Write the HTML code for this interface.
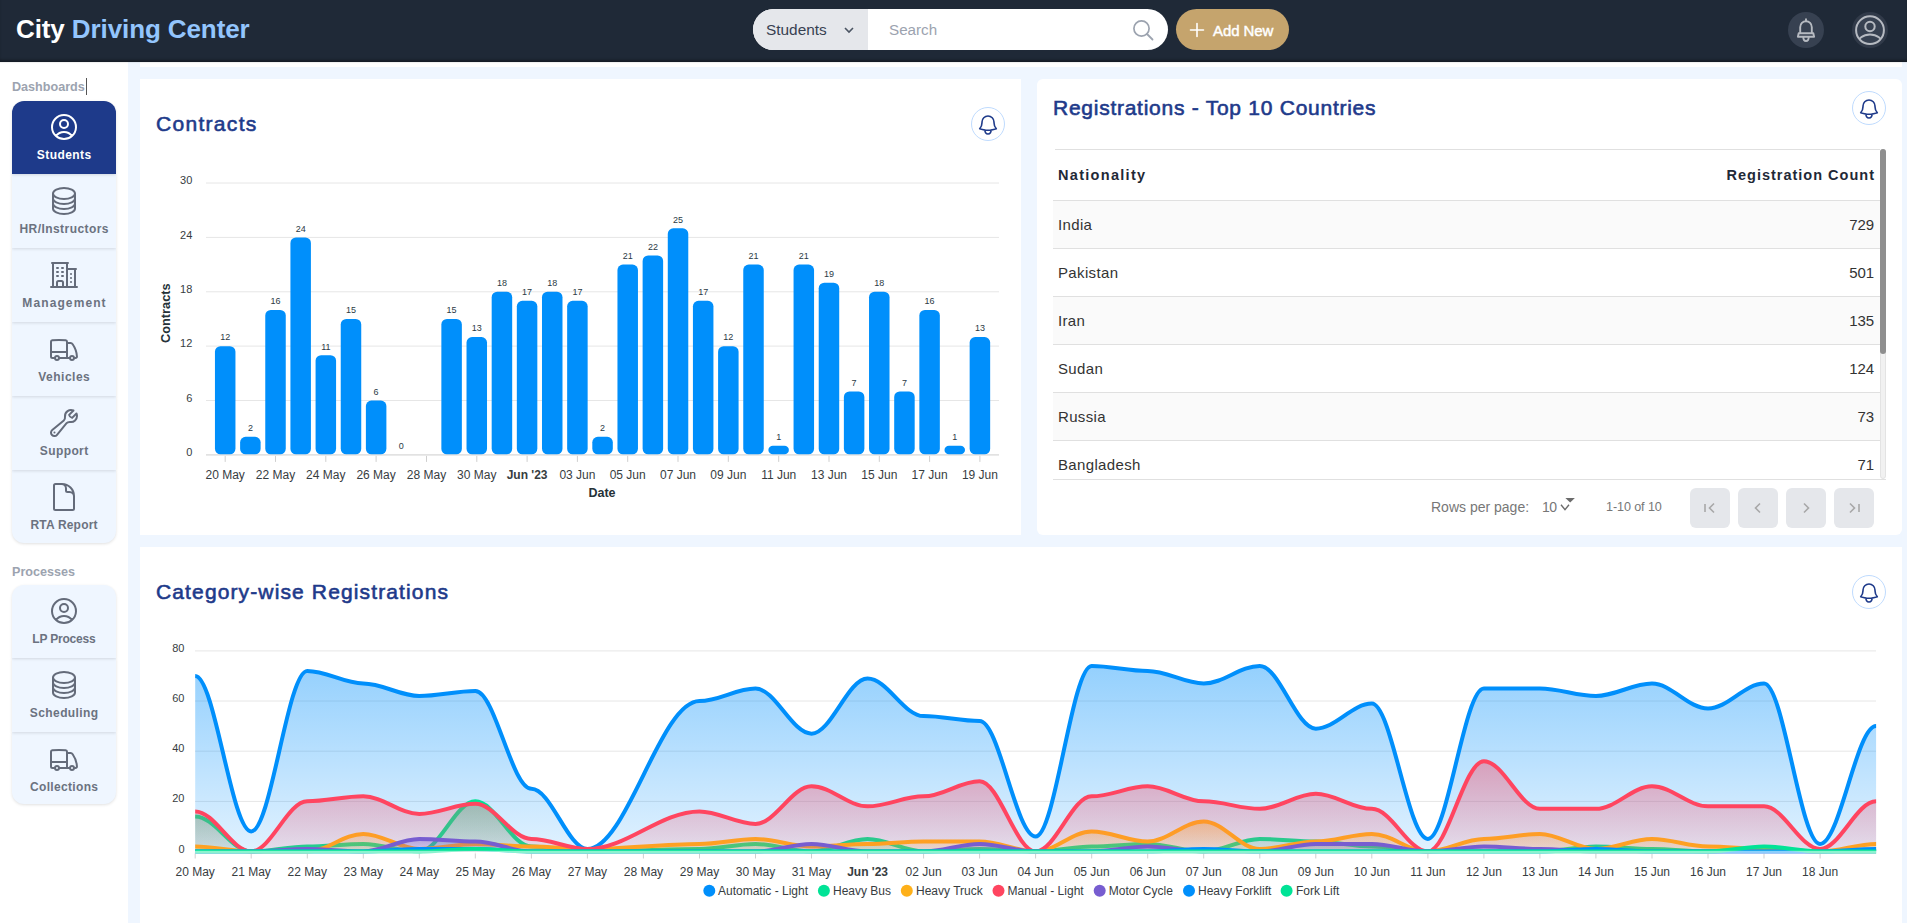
<!DOCTYPE html>
<html><head><meta charset="utf-8">
<style>
*{box-sizing:border-box;margin:0;padding:0}
html,body{width:1907px;height:923px;overflow:hidden;background:#fff;font-family:"Liberation Sans",sans-serif}
.abs{position:absolute}
#hdr{position:absolute;left:0;top:0;width:1907px;height:62px;background:#1f2937;box-shadow:inset 0 -3px 3px -1px rgba(0,0,0,.35),0 1px 1px rgba(0,0,0,.06);z-index:5}
#logo{position:absolute;left:16px;top:14px;font-size:26px;font-weight:bold;color:#fff;letter-spacing:-0.1px;white-space:nowrap}
#logo span{color:#93c5fd}
#search{position:absolute;left:753px;top:9px;width:415px;height:41px;border-radius:21px;background:#fff;overflow:hidden}
#search .dd{position:absolute;left:0;top:0;width:115px;height:41px;background:#e5e7eb}
#main{position:absolute;left:128px;top:62px;width:1779px;height:861px;background:#eff6ff}
.card{position:absolute;background:#fff}
.title{position:absolute;color:#1e3a8a;font-weight:normal;font-size:21px;white-space:nowrap;-webkit-text-stroke:0.6px #1e3a8a}
.bellbtn{position:absolute;width:34px;height:34px;border-radius:50%;border:1px solid #bfdbfe;background:#fff}
.bellbtn svg{position:absolute;left:4px;top:4.5px}
.side-label{position:absolute;left:12px;font-size:12.6px;font-weight:bold;color:#9ca3af;white-space:nowrap}
.item{position:absolute;left:12px;width:104px;height:74px;background:#eff6ff;box-shadow:0 1px 3px rgba(0,0,0,.12)}
.item .lbl{position:absolute;left:0;width:104px;text-align:center;top:47px;font-size:12px;font-weight:bold;color:#6b7280;letter-spacing:0.35px;white-space:nowrap}
.item svg{position:absolute}
.item.active{background:#1e3a8a}
.item.active .lbl{color:#fff}
table{border-collapse:collapse}
.row{position:absolute;left:1053px;width:827px;height:48px;border-bottom:1px solid #e0e0e0;font-size:15px;color:#333;letter-spacing:0.3px}
.row .c1{position:absolute;left:5px;top:15px}
.row .c2{position:absolute;right:6px;top:15px}
.pbtn{position:absolute;top:488px;width:40px;height:40px;border-radius:6px;background:#e5e7eb}
.pbtn svg{position:absolute;left:10px;top:10px}
</style></head><body>
<div id="hdr">
  <div id="logo">City <span>Driving Center</span></div>
  <div id="search">
    <div class="dd"></div>
    <div class="abs" style="left:13px;top:12px;font-size:15.4px;color:#374151">Students</div>
    <svg class="abs" style="left:90px;top:15px" width="12" height="12" viewBox="0 0 12 12"><path d="M2 4 L6 8 L10 4" fill="none" stroke="#4b5563" stroke-width="1.6"/></svg>
    <div class="abs" style="left:136px;top:11.5px;font-size:15.2px;color:#9ca3af">Search</div>
    <svg class="abs" style="left:379px;top:10px" width="22" height="22" viewBox="0 0 22 22"><circle cx="9.5" cy="9.5" r="7.6" fill="none" stroke="#9ca3af" stroke-width="1.7"/><path d="M15 15 L20.5 20.5" stroke="#9ca3af" stroke-width="1.8" stroke-linecap="round"/></svg>
  </div>
  <div class="abs" style="left:1176px;top:9px;width:113px;height:41px;border-radius:21px;background:#c5a46d"></div>
  <svg class="abs" style="left:1189px;top:22px" width="16" height="16" viewBox="0 0 16 16"><path d="M8 1.5V14.5M1.5 8H14.5" stroke="#fff" stroke-width="1.6" stroke-linecap="round"/></svg>
  <div class="abs" style="left:1213px;top:21.5px;font-size:15px;color:#fff;white-space:nowrap;-webkit-text-stroke:0.45px #fff;letter-spacing:-0.1px">Add New</div>
  <div class="abs" style="left:1788px;top:12px;width:36px;height:36px;border-radius:50%;background:#374151"></div>
  <svg class="abs" style="left:1794px;top:17px" width="24" height="26" viewBox="0 0 24 26"><path d="M12 1.5V4 M6.2 16.2V10.2C6.2 6.8 8.8 4.2 12 4.2S17.8 6.8 17.8 10.2V16.2 M4.7 16.2H19.3L20.1 19.8H3.9Z M9.3 20C9.3 22.4 10.5 24 12 24S14.7 22.4 14.7 20" fill="none" stroke="#b6bac1" stroke-width="1.9" stroke-linejoin="round"/></svg>
  <div class="abs" style="left:1852px;top:12px;width:36px;height:36px;border-radius:50%;background:#313a49"></div>
  <svg class="abs" style="left:1853px;top:13px" width="34" height="34" viewBox="0 0 34 34"><defs><clipPath id="avc"><circle cx="17" cy="17.2" r="13.9"/></clipPath></defs><circle cx="17" cy="17.2" r="13.9" fill="#374151" stroke="#b6bac1" stroke-width="2"/><circle cx="17" cy="13.5" r="4.7" fill="none" stroke="#b6bac1" stroke-width="2"/><ellipse cx="17" cy="31" rx="12.5" ry="9.5" fill="none" stroke="#b6bac1" stroke-width="2" clip-path="url(#avc)"/></svg>
</div>

<div id="main"></div>
<div class="abs" style="left:140px;top:62px;width:1762px;height:5px;background:#fff"></div>

<!-- sidebar -->
<div class="side-label" style="top:80px">Dashboards</div>
<div class="abs" style="left:86px;top:78px;width:1px;height:17px;background:#555"></div>
<div class="item active" style="top:101.0px;height:72.5px;border-radius:12px 12px 0 0;z-index:20"><svg width="32" height="32" viewBox="0 0 24 24" fill="none" stroke="#ffffff" stroke-width="1.5" stroke-linecap="round" stroke-linejoin="round" style="left:36px;top:10.0px"><path d="M17.982 18.725A7.488 7.488 0 0 0 12 15.75a7.488 7.488 0 0 0-5.982 2.975m11.963 0a9 9 0 1 0-11.963 0m11.963 0A8.966 8.966 0 0 1 12 21a8.966 8.966 0 0 1-5.982-2.275M15 9.75a3 3 0 1 1-6 0 3 3 0 0 1 6 0Z"/></svg><div class="lbl" style="top:47.0px;letter-spacing:0.44px;text-indent:0.44px">Students</div></div>
<div class="item" style="top:173.5px;height:74.0px;z-index:19"><svg width="32" height="32" viewBox="0 0 24 24" fill="none" stroke="#646b7a" stroke-width="1.5" stroke-linecap="round" stroke-linejoin="round" style="left:36px;top:11.3px"><path d="M20.25 6.375c0 2.278-3.694 4.125-8.25 4.125S3.75 8.653 3.75 6.375m16.5 0c0-2.278-3.694-4.125-8.25-4.125S3.75 4.097 3.75 6.375m16.5 0v11.25c0 2.278-3.694 4.125-8.25 4.125s-8.25-1.847-8.25-4.125V6.375m16.5 0v3.75m-16.5-3.75v3.75m16.5 0v3.75C20.25 16.153 16.556 18 12 18s-8.25-1.847-8.25-4.125v-3.75m16.5 0c0 2.278-3.694 4.125-8.25 4.125s-8.25-1.847-8.25-4.125"/></svg><div class="lbl" style="top:48.3px;letter-spacing:0.44px;text-indent:0.44px">HR/Instructors</div></div>
<div class="item" style="top:247.5px;height:74.0px;z-index:18"><svg width="32" height="32" viewBox="0 0 24 24" fill="none" stroke="#646b7a" stroke-width="1.5" stroke-linecap="round" stroke-linejoin="round" style="left:36px;top:11.3px"><path d="M2.25 21h19.5m-18-18v18m10.5-18v18m6-13.5V21M6.75 6.75h.75m-.75 3h.75m-.75 3h.75m3-6h.75m-.75 3h.75m-.75 3h.75M6.75 21v-3.375c0-.621.504-1.125 1.125-1.125h2.25c.621 0 1.125.504 1.125 1.125V21M3 3h12m-.75 4.5H21m-3.75 3.75h.008v.008h-.008v-.008Zm0 3h.008v.008h-.008v-.008Zm0 3h.008v.008h-.008v-.008Z"/></svg><div class="lbl" style="top:48.3px;letter-spacing:1.1px;text-indent:1.1px">Management</div></div>
<div class="item" style="top:321.5px;height:74.0px;z-index:17"><svg width="32" height="32" viewBox="0 0 24 24" fill="none" stroke="#646b7a" stroke-width="1.5" stroke-linecap="round" stroke-linejoin="round" style="left:36px;top:11.3px"><path d="M8.25 18.75a1.5 1.5 0 0 1-3 0m3 0a1.5 1.5 0 0 0-3 0m3 0h6m-9 0H3.375a1.125 1.125 0 0 1-1.125-1.125V14.25m17.25 4.5a1.5 1.5 0 0 1-3 0m3 0a1.5 1.5 0 0 0-3 0m3 0h1.125c.621 0 1.129-.504 1.09-1.124a17.902 17.902 0 0 0-3.213-9.193 2.056 2.056 0 0 0-1.58-.86H14.25M16.5 18.75h-2.25m0-11.177v-.958c0-.568-.422-1.048-.987-1.106a48.554 48.554 0 0 0-10.026 0 1.106 1.106 0 0 0-.987 1.106v7.635m12-6.677v6.677m0 4.5v-4.5m0 0h-12"/></svg><div class="lbl" style="top:48.3px;letter-spacing:0.5px;text-indent:0.5px">Vehicles</div></div>
<div class="item" style="top:395.5px;height:74.0px;z-index:16"><svg width="32" height="32" viewBox="0 0 24 24" fill="none" stroke="#646b7a" stroke-width="1.5" stroke-linecap="round" stroke-linejoin="round" style="left:36px;top:11.3px"><path d="M21.75 6.75a4.5 4.5 0 0 1-4.884 4.484c-1.076-.091-2.264.071-2.95.904l-7.152 8.684a2.548 2.548 0 1 1-3.586-3.586l8.684-7.152c.833-.686.995-1.874.904-2.95a4.5 4.5 0 0 1 6.336-4.486l-3.276 3.276a3.004 3.004 0 0 0 2.25 2.25l3.276-3.276c.256.565.398 1.192.398 1.852Z"/><path d="M4.867 19.125h.008v.008h-.008v-.008Z"/></svg><div class="lbl" style="top:48.3px;letter-spacing:0.4px;text-indent:0.4px">Support</div></div>
<div class="item" style="top:469.5px;height:73.5px;border-radius:0 0 12px 12px;z-index:15"><svg width="32" height="32" viewBox="0 0 24 24" fill="none" stroke="#646b7a" stroke-width="1.5" stroke-linecap="round" stroke-linejoin="round" style="left:36px;top:11.3px"><path d="M19.5 14.25v-2.625a3.375 3.375 0 0 0-3.375-3.375h-1.5A1.125 1.125 0 0 1 13.5 7.125v-1.5a3.375 3.375 0 0 0-3.375-3.375H8.25m2.25 0H5.625c-.621 0-1.125.504-1.125 1.125v17.25c0 .621.504 1.125 1.125 1.125h12.75c.621 0 1.125-.504 1.125-1.125V11.25a9 9 0 0 0-9-9Z"/></svg><div class="lbl" style="top:48.3px;letter-spacing:0.19px;text-indent:0.19px">RTA Report</div></div>
<div class="item" style="top:585.0px;height:72.5px;border-radius:12px 12px 0 0;z-index:20"><svg width="32" height="32" viewBox="0 0 24 24" fill="none" stroke="#646b7a" stroke-width="1.5" stroke-linecap="round" stroke-linejoin="round" style="left:36px;top:10.0px"><path d="M17.982 18.725A7.488 7.488 0 0 0 12 15.75a7.488 7.488 0 0 0-5.982 2.975m11.963 0a9 9 0 1 0-11.963 0m11.963 0A8.966 8.966 0 0 1 12 21a8.966 8.966 0 0 1-5.982-2.275M15 9.75a3 3 0 1 1-6 0 3 3 0 0 1 6 0Z"/></svg><div class="lbl" style="top:47.0px;letter-spacing:-0.19px;text-indent:-0.19px">LP Process</div></div>
<div class="item" style="top:657.5px;height:74.0px;z-index:19"><svg width="32" height="32" viewBox="0 0 24 24" fill="none" stroke="#646b7a" stroke-width="1.5" stroke-linecap="round" stroke-linejoin="round" style="left:36px;top:11.3px"><path d="M20.25 6.375c0 2.278-3.694 4.125-8.25 4.125S3.75 8.653 3.75 6.375m16.5 0c0-2.278-3.694-4.125-8.25-4.125S3.75 4.097 3.75 6.375m16.5 0v11.25c0 2.278-3.694 4.125-8.25 4.125s-8.25-1.847-8.25-4.125V6.375m16.5 0v3.75m-16.5-3.75v3.75m16.5 0v3.75C20.25 16.153 16.556 18 12 18s-8.25-1.847-8.25-4.125v-3.75m16.5 0c0 2.278-3.694 4.125-8.25 4.125s-8.25-1.847-8.25-4.125"/></svg><div class="lbl" style="top:48.3px;letter-spacing:0.41px;text-indent:0.41px">Scheduling</div></div>
<div class="item" style="top:731.5px;height:72.5px;border-radius:0 0 12px 12px;z-index:18"><svg width="32" height="32" viewBox="0 0 24 24" fill="none" stroke="#646b7a" stroke-width="1.5" stroke-linecap="round" stroke-linejoin="round" style="left:36px;top:11.3px"><path d="M8.25 18.75a1.5 1.5 0 0 1-3 0m3 0a1.5 1.5 0 0 0-3 0m3 0h6m-9 0H3.375a1.125 1.125 0 0 1-1.125-1.125V14.25m17.25 4.5a1.5 1.5 0 0 1-3 0m3 0a1.5 1.5 0 0 0-3 0m3 0h1.125c.621 0 1.129-.504 1.09-1.124a17.902 17.902 0 0 0-3.213-9.193 2.056 2.056 0 0 0-1.58-.86H14.25M16.5 18.75h-2.25m0-11.177v-.958c0-.568-.422-1.048-.987-1.106a48.554 48.554 0 0 0-10.026 0 1.106 1.106 0 0 0-.987 1.106v7.635m12-6.677v6.677m0 4.5v-4.5m0 0h-12"/></svg><div class="lbl" style="top:48.3px;letter-spacing:0.34px;text-indent:0.34px">Collections</div></div>
<div class="side-label" style="top:565px">Processes</div>

<!-- Contracts card -->
<div class="card" style="left:140px;top:79px;width:881px;height:456px"></div>
<div class="title" style="left:156px;top:112px;letter-spacing:1.3px">Contracts</div>
<div class="bellbtn" style="left:971px;top:107px"><svg width="24" height="24" viewBox="0 0 24 24" fill="none" stroke="#1e3a8a" stroke-width="1.6" stroke-linecap="round" stroke-linejoin="round" ><path d="M14.857 17.082a23.848 23.848 0 0 0 5.454-1.31A8.967 8.967 0 0 1 18 9.75V9A6 6 0 0 0 6 9v.75a8.967 8.967 0 0 1-2.312 6.022c1.733.64 3.56 1.085 5.455 1.31m5.714 0a24.255 24.255 0 0 1-5.714 0m5.714 0a3 3 0 1 1-5.714 0"/></svg></div>
<svg class="abs" style="left:0;top:0" width="1907" height="923" font-family="Liberation Sans, sans-serif">
<line x1="206" x2="999" y1="454.9" y2="454.9" stroke="#e6e6e6" stroke-width="1"/>
<text x="192.3" y="456.1" text-anchor="end" font-size="11" fill="#373d3f">0</text>
<line x1="206" x2="999" y1="400.5" y2="400.5" stroke="#e6e6e6" stroke-width="1"/>
<text x="192.3" y="401.7" text-anchor="end" font-size="11" fill="#373d3f">6</text>
<line x1="206" x2="999" y1="346.1" y2="346.1" stroke="#e6e6e6" stroke-width="1"/>
<text x="192.3" y="347.3" text-anchor="end" font-size="11" fill="#373d3f">12</text>
<line x1="206" x2="999" y1="291.8" y2="291.8" stroke="#e6e6e6" stroke-width="1"/>
<text x="192.3" y="293.0" text-anchor="end" font-size="11" fill="#373d3f">18</text>
<line x1="206" x2="999" y1="237.4" y2="237.4" stroke="#e6e6e6" stroke-width="1"/>
<text x="192.3" y="238.6" text-anchor="end" font-size="11" fill="#373d3f">24</text>
<line x1="206" x2="999" y1="183.0" y2="183.0" stroke="#e6e6e6" stroke-width="1"/>
<text x="192.3" y="184.2" text-anchor="end" font-size="11" fill="#373d3f">30</text>
<line x1="206" x2="999" y1="454.9" y2="454.9" stroke="#d9d9d9" stroke-width="1"/>
<line x1="225.2" x2="225.2" y1="455.9" y2="461.9" stroke="#cfcfcf"/>
<text x="225.2" y="479.1" text-anchor="middle" font-size="12" fill="#373d3f">20 May</text>
<line x1="275.5" x2="275.5" y1="455.9" y2="461.9" stroke="#cfcfcf"/>
<text x="275.5" y="479.1" text-anchor="middle" font-size="12" fill="#373d3f">22 May</text>
<line x1="325.8" x2="325.8" y1="455.9" y2="461.9" stroke="#cfcfcf"/>
<text x="325.8" y="479.1" text-anchor="middle" font-size="12" fill="#373d3f">24 May</text>
<line x1="376.1" x2="376.1" y1="455.9" y2="461.9" stroke="#cfcfcf"/>
<text x="376.1" y="479.1" text-anchor="middle" font-size="12" fill="#373d3f">26 May</text>
<line x1="426.5" x2="426.5" y1="455.9" y2="461.9" stroke="#cfcfcf"/>
<text x="426.5" y="479.1" text-anchor="middle" font-size="12" fill="#373d3f">28 May</text>
<line x1="476.8" x2="476.8" y1="455.9" y2="461.9" stroke="#cfcfcf"/>
<text x="476.8" y="479.1" text-anchor="middle" font-size="12" fill="#373d3f">30 May</text>
<line x1="527.1" x2="527.1" y1="455.9" y2="461.9" stroke="#cfcfcf"/>
<text x="527.1" y="479.1" text-anchor="middle" font-size="12" fill="#373d3f" font-weight="bold">Jun &#39;23</text>
<line x1="577.4" x2="577.4" y1="455.9" y2="461.9" stroke="#cfcfcf"/>
<text x="577.4" y="479.1" text-anchor="middle" font-size="12" fill="#373d3f">03 Jun</text>
<line x1="627.7" x2="627.7" y1="455.9" y2="461.9" stroke="#cfcfcf"/>
<text x="627.7" y="479.1" text-anchor="middle" font-size="12" fill="#373d3f">05 Jun</text>
<line x1="678.0" x2="678.0" y1="455.9" y2="461.9" stroke="#cfcfcf"/>
<text x="678.0" y="479.1" text-anchor="middle" font-size="12" fill="#373d3f">07 Jun</text>
<line x1="728.3" x2="728.3" y1="455.9" y2="461.9" stroke="#cfcfcf"/>
<text x="728.3" y="479.1" text-anchor="middle" font-size="12" fill="#373d3f">09 Jun</text>
<line x1="778.7" x2="778.7" y1="455.9" y2="461.9" stroke="#cfcfcf"/>
<text x="778.7" y="479.1" text-anchor="middle" font-size="12" fill="#373d3f">11 Jun</text>
<line x1="829.0" x2="829.0" y1="455.9" y2="461.9" stroke="#cfcfcf"/>
<text x="829.0" y="479.1" text-anchor="middle" font-size="12" fill="#373d3f">13 Jun</text>
<line x1="879.3" x2="879.3" y1="455.9" y2="461.9" stroke="#cfcfcf"/>
<text x="879.3" y="479.1" text-anchor="middle" font-size="12" fill="#373d3f">15 Jun</text>
<line x1="929.6" x2="929.6" y1="455.9" y2="461.9" stroke="#cfcfcf"/>
<text x="929.6" y="479.1" text-anchor="middle" font-size="12" fill="#373d3f">17 Jun</text>
<line x1="979.9" x2="979.9" y1="455.9" y2="461.9" stroke="#cfcfcf"/>
<text x="979.9" y="479.1" text-anchor="middle" font-size="12" fill="#373d3f">19 Jun</text>
<rect x="214.95" y="346.14" width="20.5" height="108.16" rx="5.5" fill="#008FFB"/>
<text x="225.2" y="340.4" text-anchor="middle" font-size="9" fill="#2b3a45">12</text>
<rect x="240.11" y="436.77" width="20.5" height="17.53" rx="5.5" fill="#008FFB"/>
<text x="250.4" y="431.1" text-anchor="middle" font-size="9" fill="#2b3a45">2</text>
<rect x="265.26" y="309.89" width="20.5" height="144.41" rx="5.5" fill="#008FFB"/>
<text x="275.5" y="304.2" text-anchor="middle" font-size="9" fill="#2b3a45">16</text>
<rect x="290.42" y="237.38" width="20.5" height="216.92" rx="5.5" fill="#008FFB"/>
<text x="300.7" y="231.7" text-anchor="middle" font-size="9" fill="#2b3a45">24</text>
<rect x="315.58" y="355.20" width="20.5" height="99.10" rx="5.5" fill="#008FFB"/>
<text x="325.8" y="349.5" text-anchor="middle" font-size="9" fill="#2b3a45">11</text>
<rect x="340.74" y="318.95" width="20.5" height="135.35" rx="5.5" fill="#008FFB"/>
<text x="351.0" y="313.2" text-anchor="middle" font-size="9" fill="#2b3a45">15</text>
<rect x="365.89" y="400.52" width="20.5" height="53.78" rx="5.5" fill="#008FFB"/>
<text x="376.1" y="394.8" text-anchor="middle" font-size="9" fill="#2b3a45">6</text>
<text x="401.3" y="449.2" text-anchor="middle" font-size="9" fill="#2b3a45">0</text>
<rect x="441.36" y="318.95" width="20.5" height="135.35" rx="5.5" fill="#008FFB"/>
<text x="451.6" y="313.2" text-anchor="middle" font-size="9" fill="#2b3a45">15</text>
<rect x="466.52" y="337.08" width="20.5" height="117.22" rx="5.5" fill="#008FFB"/>
<text x="476.8" y="331.4" text-anchor="middle" font-size="9" fill="#2b3a45">13</text>
<rect x="491.68" y="291.76" width="20.5" height="162.54" rx="5.5" fill="#008FFB"/>
<text x="501.9" y="286.1" text-anchor="middle" font-size="9" fill="#2b3a45">18</text>
<rect x="516.83" y="300.82" width="20.5" height="153.48" rx="5.5" fill="#008FFB"/>
<text x="527.1" y="295.1" text-anchor="middle" font-size="9" fill="#2b3a45">17</text>
<rect x="541.99" y="291.76" width="20.5" height="162.54" rx="5.5" fill="#008FFB"/>
<text x="552.2" y="286.1" text-anchor="middle" font-size="9" fill="#2b3a45">18</text>
<rect x="567.15" y="300.82" width="20.5" height="153.48" rx="5.5" fill="#008FFB"/>
<text x="577.4" y="295.1" text-anchor="middle" font-size="9" fill="#2b3a45">17</text>
<rect x="592.31" y="436.77" width="20.5" height="17.53" rx="5.5" fill="#008FFB"/>
<text x="602.6" y="431.1" text-anchor="middle" font-size="9" fill="#2b3a45">2</text>
<rect x="617.46" y="264.57" width="20.5" height="189.73" rx="5.5" fill="#008FFB"/>
<text x="627.7" y="258.9" text-anchor="middle" font-size="9" fill="#2b3a45">21</text>
<rect x="642.62" y="255.51" width="20.5" height="198.79" rx="5.5" fill="#008FFB"/>
<text x="652.9" y="249.8" text-anchor="middle" font-size="9" fill="#2b3a45">22</text>
<rect x="667.78" y="228.32" width="20.5" height="225.98" rx="5.5" fill="#008FFB"/>
<text x="678.0" y="222.6" text-anchor="middle" font-size="9" fill="#2b3a45">25</text>
<rect x="692.93" y="300.82" width="20.5" height="153.48" rx="5.5" fill="#008FFB"/>
<text x="703.2" y="295.1" text-anchor="middle" font-size="9" fill="#2b3a45">17</text>
<rect x="718.09" y="346.14" width="20.5" height="108.16" rx="5.5" fill="#008FFB"/>
<text x="728.3" y="340.4" text-anchor="middle" font-size="9" fill="#2b3a45">12</text>
<rect x="743.25" y="264.57" width="20.5" height="189.73" rx="5.5" fill="#008FFB"/>
<text x="753.5" y="258.9" text-anchor="middle" font-size="9" fill="#2b3a45">21</text>
<rect x="768.40" y="445.84" width="20.5" height="8.46" rx="4.5" fill="#008FFB"/>
<text x="778.7" y="440.1" text-anchor="middle" font-size="9" fill="#2b3a45">1</text>
<rect x="793.56" y="264.57" width="20.5" height="189.73" rx="5.5" fill="#008FFB"/>
<text x="803.8" y="258.9" text-anchor="middle" font-size="9" fill="#2b3a45">21</text>
<rect x="818.72" y="282.70" width="20.5" height="171.60" rx="5.5" fill="#008FFB"/>
<text x="829.0" y="277.0" text-anchor="middle" font-size="9" fill="#2b3a45">19</text>
<rect x="843.88" y="391.46" width="20.5" height="62.84" rx="5.5" fill="#008FFB"/>
<text x="854.1" y="385.8" text-anchor="middle" font-size="9" fill="#2b3a45">7</text>
<rect x="869.03" y="291.76" width="20.5" height="162.54" rx="5.5" fill="#008FFB"/>
<text x="879.3" y="286.1" text-anchor="middle" font-size="9" fill="#2b3a45">18</text>
<rect x="894.19" y="391.46" width="20.5" height="62.84" rx="5.5" fill="#008FFB"/>
<text x="904.4" y="385.8" text-anchor="middle" font-size="9" fill="#2b3a45">7</text>
<rect x="919.35" y="309.89" width="20.5" height="144.41" rx="5.5" fill="#008FFB"/>
<text x="929.6" y="304.2" text-anchor="middle" font-size="9" fill="#2b3a45">16</text>
<rect x="944.50" y="445.84" width="20.5" height="8.46" rx="4.5" fill="#008FFB"/>
<text x="954.8" y="440.1" text-anchor="middle" font-size="9" fill="#2b3a45">1</text>
<rect x="969.66" y="337.08" width="20.5" height="117.22" rx="5.5" fill="#008FFB"/>
<text x="979.9" y="331.4" text-anchor="middle" font-size="9" fill="#2b3a45">13</text>
<text transform="translate(169.5,313.2) rotate(-90)" text-anchor="middle" font-size="12.8" font-weight="bold" fill="#263238">Contracts</text>
<text x="602" y="497" text-anchor="middle" font-size="12.5" font-weight="bold" fill="#263238">Date</text>
</svg>

<!-- Registrations card -->
<div class="card" style="left:1037px;top:79px;width:865px;height:456px;border-radius:6px"></div>
<div class="title" style="left:1053px;top:96px;letter-spacing:0.74px">Registrations - Top 10 Countries</div>
<div class="bellbtn" style="left:1852px;top:91px"><svg width="24" height="24" viewBox="0 0 24 24" fill="none" stroke="#1e3a8a" stroke-width="1.6" stroke-linecap="round" stroke-linejoin="round" ><path d="M14.857 17.082a23.848 23.848 0 0 0 5.454-1.31A8.967 8.967 0 0 1 18 9.75V9A6 6 0 0 0 6 9v.75a8.967 8.967 0 0 1-2.312 6.022c1.733.64 3.56 1.085 5.455 1.31m5.714 0a24.255 24.255 0 0 1-5.714 0m5.714 0a3 3 0 1 1-5.714 0"/></svg></div>
<div class="abs" style="left:1055px;top:149px;width:825px;height:1px;background:#e0e0e0"></div>
<div class="abs" style="left:1058px;top:167px;font-size:14.5px;font-weight:bold;color:#1f2937;letter-spacing:1.3px">Nationality</div>
<div class="abs" style="right:33px;top:167px;font-size:14.5px;font-weight:bold;color:#1f2937;letter-spacing:1.0px;white-space:nowrap">Registration Coun<span style="letter-spacing:0">t</span></div>
<div class="abs" style="left:1053px;top:200px;width:827px;height:1px;background:#e0e0e0"></div>
<div class="abs" style="left:1053px;top:201px;width:827px;height:47px;background:#fafafa"></div>
<div class="abs" style="left:1053px;top:248px;width:827px;height:1px;background:#e0e0e0"></div>
<div class="abs" style="left:1058px;top:216px;font-size:15px;color:#333;letter-spacing:0.35px">India</div>
<div class="abs" style="right:33px;top:216px;font-size:15px;color:#333;letter-spacing:-0.1px">729</div>
<div class="abs" style="left:1053px;top:249px;width:827px;height:47px;background:#fff"></div>
<div class="abs" style="left:1053px;top:296px;width:827px;height:1px;background:#e0e0e0"></div>
<div class="abs" style="left:1058px;top:264px;font-size:15px;color:#333;letter-spacing:0.35px">Pakistan</div>
<div class="abs" style="right:33px;top:264px;font-size:15px;color:#333;letter-spacing:-0.1px">501</div>
<div class="abs" style="left:1053px;top:297px;width:827px;height:47px;background:#fafafa"></div>
<div class="abs" style="left:1053px;top:344px;width:827px;height:1px;background:#e0e0e0"></div>
<div class="abs" style="left:1058px;top:312px;font-size:15px;color:#333;letter-spacing:0.35px">Iran</div>
<div class="abs" style="right:33px;top:312px;font-size:15px;color:#333;letter-spacing:-0.1px">135</div>
<div class="abs" style="left:1053px;top:345px;width:827px;height:47px;background:#fff"></div>
<div class="abs" style="left:1053px;top:392px;width:827px;height:1px;background:#e0e0e0"></div>
<div class="abs" style="left:1058px;top:360px;font-size:15px;color:#333;letter-spacing:0.35px">Sudan</div>
<div class="abs" style="right:33px;top:360px;font-size:15px;color:#333;letter-spacing:-0.1px">124</div>
<div class="abs" style="left:1053px;top:393px;width:827px;height:47px;background:#fafafa"></div>
<div class="abs" style="left:1053px;top:440px;width:827px;height:1px;background:#e0e0e0"></div>
<div class="abs" style="left:1058px;top:408px;font-size:15px;color:#333;letter-spacing:0.35px">Russia</div>
<div class="abs" style="right:33px;top:408px;font-size:15px;color:#333;letter-spacing:-0.1px">73</div>
<div class="abs" style="left:1053px;top:441px;width:827px;height:30px;background:#fff"></div>
<div class="abs" style="left:1058px;top:456px;font-size:15px;color:#333;letter-spacing:0.35px">Bangladesh</div>
<div class="abs" style="right:33px;top:456px;font-size:15px;color:#333;letter-spacing:-0.1px">71</div>
<div class="abs" style="left:1053px;top:479px;width:833px;height:1px;background:#e0e0e0"></div>
<div class="abs" style="left:1880px;top:149px;width:6px;height:330px;border-radius:3px;background:#f1f1f1;border:1px solid #e3e3e3"></div>
<div class="abs" style="left:1880px;top:149px;width:6px;height:205px;border-radius:3px;background:#8f8f8f"></div>
<div class="abs" style="left:1431px;top:499px;font-size:14px;color:#777;white-space:nowrap">Rows per page:</div>
<div class="abs" style="left:1542px;top:499px;font-size:14px;color:#777;letter-spacing:-0.6px">10</div>
<svg class="abs" style="left:1559px;top:496px" width="18" height="18" viewBox="0 0 18 18"><path d="M6.4 1.9H15.9L11.15 6.6Z" fill="#6b6b6b"/><path d="M2 8.8L6 13.6L10 8.8" fill="none" stroke="#6b6b6b" stroke-width="1.4"/></svg>
<div class="abs" style="left:1606px;top:500px;font-size:12.6px;color:#777;white-space:nowrap;letter-spacing:-0.1px">1-10 of 10</div>
<div class="pbtn" style="left:1690px"><svg width="20" height="20" viewBox="0 0 20 20"><path d="M5 6V14 M14 5.5L9.5 10L14 14.5" fill="none" stroke="#a8a8a8" stroke-width="1.6"/></svg></div>
<div class="pbtn" style="left:1738px"><svg width="20" height="20" viewBox="0 0 20 20"><path d="M12 5.5L7.5 10L12 14.5" fill="none" stroke="#a8a8a8" stroke-width="1.6"/></svg></div>
<div class="pbtn" style="left:1786px"><svg width="20" height="20" viewBox="0 0 20 20"><path d="M8 5.5L12.5 10L8 14.5" fill="none" stroke="#a8a8a8" stroke-width="1.6"/></svg></div>
<div class="pbtn" style="left:1834px"><svg width="20" height="20" viewBox="0 0 20 20"><path d="M15 6V14 M6 5.5L10.5 10L6 14.5" fill="none" stroke="#a8a8a8" stroke-width="1.6"/></svg></div>

<!-- Category card -->
<div class="card" style="left:140px;top:547px;width:1762px;height:376px"></div>
<div class="title" style="left:156px;top:580px;letter-spacing:1.13px">Category-wise Registrations</div>
<div class="bellbtn" style="left:1852px;top:575px"><svg width="24" height="24" viewBox="0 0 24 24" fill="none" stroke="#1e3a8a" stroke-width="1.6" stroke-linecap="round" stroke-linejoin="round" ><path d="M14.857 17.082a23.848 23.848 0 0 0 5.454-1.31A8.967 8.967 0 0 1 18 9.75V9A6 6 0 0 0 6 9v.75a8.967 8.967 0 0 1-2.312 6.022c1.733.64 3.56 1.085 5.455 1.31m5.714 0a24.255 24.255 0 0 1-5.714 0m5.714 0a3 3 0 1 1-5.714 0"/></svg></div>
<svg class="abs" style="left:0;top:0" width="1907" height="923" font-family="Liberation Sans, sans-serif">
<defs>
<linearGradient id="g0" x1="0" y1="0" x2="0" y2="1"><stop offset="0" stop-color="#008FFB" stop-opacity="0.42"/><stop offset="1" stop-color="#008FFB" stop-opacity="0.12"/></linearGradient>
<linearGradient id="g1" x1="0" y1="0" x2="0" y2="1"><stop offset="0" stop-color="#00E396" stop-opacity="0.42"/><stop offset="1" stop-color="#00E396" stop-opacity="0.12"/></linearGradient>
<linearGradient id="g2" x1="0" y1="0" x2="0" y2="1"><stop offset="0" stop-color="#FEB019" stop-opacity="0.42"/><stop offset="1" stop-color="#FEB019" stop-opacity="0.12"/></linearGradient>
<linearGradient id="g3" x1="0" y1="0" x2="0" y2="1"><stop offset="0" stop-color="#FF4560" stop-opacity="0.42"/><stop offset="1" stop-color="#FF4560" stop-opacity="0.12"/></linearGradient>
<linearGradient id="g4" x1="0" y1="0" x2="0" y2="1"><stop offset="0" stop-color="#775DD0" stop-opacity="0.42"/><stop offset="1" stop-color="#775DD0" stop-opacity="0.12"/></linearGradient>
<linearGradient id="g5" x1="0" y1="0" x2="0" y2="1"><stop offset="0" stop-color="#008FFB" stop-opacity="0.42"/><stop offset="1" stop-color="#008FFB" stop-opacity="0.12"/></linearGradient>
<linearGradient id="g6" x1="0" y1="0" x2="0" y2="1"><stop offset="0" stop-color="#00E396" stop-opacity="0.42"/><stop offset="1" stop-color="#00E396" stop-opacity="0.12"/></linearGradient>
</defs>
<line x1="195" x2="1876" y1="851.5" y2="851.5" stroke="#e6e6e6" stroke-width="1"/>
<text x="184.5" y="852.5" text-anchor="end" font-size="11" fill="#373d3f">0</text>
<line x1="195" x2="1876" y1="801.4" y2="801.4" stroke="#e6e6e6" stroke-width="1"/>
<text x="184.5" y="802.4" text-anchor="end" font-size="11" fill="#373d3f">20</text>
<line x1="195" x2="1876" y1="751.2" y2="751.2" stroke="#e6e6e6" stroke-width="1"/>
<text x="184.5" y="752.2" text-anchor="end" font-size="11" fill="#373d3f">40</text>
<line x1="195" x2="1876" y1="701.0" y2="701.0" stroke="#e6e6e6" stroke-width="1"/>
<text x="184.5" y="702.0" text-anchor="end" font-size="11" fill="#373d3f">60</text>
<line x1="195" x2="1876" y1="650.9" y2="650.9" stroke="#e6e6e6" stroke-width="1"/>
<text x="184.5" y="651.9" text-anchor="end" font-size="11" fill="#373d3f">80</text>
<line x1="195.2" x2="195.2" y1="852.5" y2="858.5" stroke="#cfcfcf"/>
<text x="195.2" y="876.0" text-anchor="middle" font-size="12" fill="#373d3f">20 May</text>
<line x1="251.2" x2="251.2" y1="852.5" y2="858.5" stroke="#cfcfcf"/>
<text x="251.2" y="876.0" text-anchor="middle" font-size="12" fill="#373d3f">21 May</text>
<line x1="307.3" x2="307.3" y1="852.5" y2="858.5" stroke="#cfcfcf"/>
<text x="307.3" y="876.0" text-anchor="middle" font-size="12" fill="#373d3f">22 May</text>
<line x1="363.3" x2="363.3" y1="852.5" y2="858.5" stroke="#cfcfcf"/>
<text x="363.3" y="876.0" text-anchor="middle" font-size="12" fill="#373d3f">23 May</text>
<line x1="419.3" x2="419.3" y1="852.5" y2="858.5" stroke="#cfcfcf"/>
<text x="419.3" y="876.0" text-anchor="middle" font-size="12" fill="#373d3f">24 May</text>
<line x1="475.3" x2="475.3" y1="852.5" y2="858.5" stroke="#cfcfcf"/>
<text x="475.3" y="876.0" text-anchor="middle" font-size="12" fill="#373d3f">25 May</text>
<line x1="531.4" x2="531.4" y1="852.5" y2="858.5" stroke="#cfcfcf"/>
<text x="531.4" y="876.0" text-anchor="middle" font-size="12" fill="#373d3f">26 May</text>
<line x1="587.4" x2="587.4" y1="852.5" y2="858.5" stroke="#cfcfcf"/>
<text x="587.4" y="876.0" text-anchor="middle" font-size="12" fill="#373d3f">27 May</text>
<line x1="643.4" x2="643.4" y1="852.5" y2="858.5" stroke="#cfcfcf"/>
<text x="643.4" y="876.0" text-anchor="middle" font-size="12" fill="#373d3f">28 May</text>
<line x1="699.5" x2="699.5" y1="852.5" y2="858.5" stroke="#cfcfcf"/>
<text x="699.5" y="876.0" text-anchor="middle" font-size="12" fill="#373d3f">29 May</text>
<line x1="755.5" x2="755.5" y1="852.5" y2="858.5" stroke="#cfcfcf"/>
<text x="755.5" y="876.0" text-anchor="middle" font-size="12" fill="#373d3f">30 May</text>
<line x1="811.5" x2="811.5" y1="852.5" y2="858.5" stroke="#cfcfcf"/>
<text x="811.5" y="876.0" text-anchor="middle" font-size="12" fill="#373d3f">31 May</text>
<line x1="867.6" x2="867.6" y1="852.5" y2="858.5" stroke="#cfcfcf"/>
<text x="867.6" y="876.0" text-anchor="middle" font-size="12" fill="#373d3f" font-weight="bold">Jun &#39;23</text>
<line x1="923.6" x2="923.6" y1="852.5" y2="858.5" stroke="#cfcfcf"/>
<text x="923.6" y="876.0" text-anchor="middle" font-size="12" fill="#373d3f">02 Jun</text>
<line x1="979.6" x2="979.6" y1="852.5" y2="858.5" stroke="#cfcfcf"/>
<text x="979.6" y="876.0" text-anchor="middle" font-size="12" fill="#373d3f">03 Jun</text>
<line x1="1035.6" x2="1035.6" y1="852.5" y2="858.5" stroke="#cfcfcf"/>
<text x="1035.6" y="876.0" text-anchor="middle" font-size="12" fill="#373d3f">04 Jun</text>
<line x1="1091.7" x2="1091.7" y1="852.5" y2="858.5" stroke="#cfcfcf"/>
<text x="1091.7" y="876.0" text-anchor="middle" font-size="12" fill="#373d3f">05 Jun</text>
<line x1="1147.7" x2="1147.7" y1="852.5" y2="858.5" stroke="#cfcfcf"/>
<text x="1147.7" y="876.0" text-anchor="middle" font-size="12" fill="#373d3f">06 Jun</text>
<line x1="1203.7" x2="1203.7" y1="852.5" y2="858.5" stroke="#cfcfcf"/>
<text x="1203.7" y="876.0" text-anchor="middle" font-size="12" fill="#373d3f">07 Jun</text>
<line x1="1259.8" x2="1259.8" y1="852.5" y2="858.5" stroke="#cfcfcf"/>
<text x="1259.8" y="876.0" text-anchor="middle" font-size="12" fill="#373d3f">08 Jun</text>
<line x1="1315.8" x2="1315.8" y1="852.5" y2="858.5" stroke="#cfcfcf"/>
<text x="1315.8" y="876.0" text-anchor="middle" font-size="12" fill="#373d3f">09 Jun</text>
<line x1="1371.8" x2="1371.8" y1="852.5" y2="858.5" stroke="#cfcfcf"/>
<text x="1371.8" y="876.0" text-anchor="middle" font-size="12" fill="#373d3f">10 Jun</text>
<line x1="1427.9" x2="1427.9" y1="852.5" y2="858.5" stroke="#cfcfcf"/>
<text x="1427.9" y="876.0" text-anchor="middle" font-size="12" fill="#373d3f">11 Jun</text>
<line x1="1483.9" x2="1483.9" y1="852.5" y2="858.5" stroke="#cfcfcf"/>
<text x="1483.9" y="876.0" text-anchor="middle" font-size="12" fill="#373d3f">12 Jun</text>
<line x1="1539.9" x2="1539.9" y1="852.5" y2="858.5" stroke="#cfcfcf"/>
<text x="1539.9" y="876.0" text-anchor="middle" font-size="12" fill="#373d3f">13 Jun</text>
<line x1="1595.9" x2="1595.9" y1="852.5" y2="858.5" stroke="#cfcfcf"/>
<text x="1595.9" y="876.0" text-anchor="middle" font-size="12" fill="#373d3f">14 Jun</text>
<line x1="1652.0" x2="1652.0" y1="852.5" y2="858.5" stroke="#cfcfcf"/>
<text x="1652.0" y="876.0" text-anchor="middle" font-size="12" fill="#373d3f">15 Jun</text>
<line x1="1708.0" x2="1708.0" y1="852.5" y2="858.5" stroke="#cfcfcf"/>
<text x="1708.0" y="876.0" text-anchor="middle" font-size="12" fill="#373d3f">16 Jun</text>
<line x1="1764.0" x2="1764.0" y1="852.5" y2="858.5" stroke="#cfcfcf"/>
<text x="1764.0" y="876.0" text-anchor="middle" font-size="12" fill="#373d3f">17 Jun</text>
<line x1="1820.1" x2="1820.1" y1="852.5" y2="858.5" stroke="#cfcfcf"/>
<text x="1820.1" y="876.0" text-anchor="middle" font-size="12" fill="#373d3f">18 Jun</text>
<line x1="195" x2="1876" y1="851.5" y2="851.5" stroke="#d9d9d9" stroke-width="1"/>
<path d="M195.20,675.98 C214.81,675.98 231.62,831.44 251.23,831.44 C270.84,831.44 287.65,670.96 307.26,670.96 C326.87,670.96 343.68,683.50 363.29,683.50 C382.90,683.50 399.71,696.03 419.32,696.03 C438.93,696.03 455.74,691.02 475.35,691.02 C494.96,691.02 511.77,788.81 531.38,788.81 C550.99,788.81 567.80,848.99 587.41,848.99 C626.63,848.99 660.25,701.05 699.47,701.05 C719.08,701.05 735.89,688.51 755.50,688.51 C775.11,688.51 791.92,733.65 811.53,733.65 C831.14,733.65 847.95,678.48 867.56,678.48 C887.17,678.48 903.98,716.10 923.59,716.10 C943.20,716.10 960.01,721.11 979.62,721.11 C999.23,721.11 1016.04,836.46 1035.65,836.46 C1055.26,836.46 1072.07,665.95 1091.68,665.95 C1111.29,665.95 1128.10,670.96 1147.71,670.96 C1167.32,670.96 1184.13,683.50 1203.74,683.50 C1223.35,683.50 1240.16,665.95 1259.77,665.95 C1279.38,665.95 1296.19,728.63 1315.80,728.63 C1335.41,728.63 1352.22,703.56 1371.83,703.56 C1391.44,703.56 1408.25,838.96 1427.86,838.96 C1447.47,838.96 1464.28,688.51 1483.89,688.51 C1503.50,688.51 1520.31,688.51 1539.92,688.51 C1559.53,688.51 1576.34,696.03 1595.95,696.03 C1615.56,696.03 1632.37,683.50 1651.98,683.50 C1671.59,683.50 1688.40,708.57 1708.01,708.57 C1727.62,708.57 1744.43,683.50 1764.04,683.50 C1783.65,683.50 1800.46,843.98 1820.07,843.98 C1839.68,843.98 1856.49,726.12 1876.10,726.12 L1876.10,851.5 L195.20,851.5 Z" fill="url(#g0)"/>
<path d="M195.20,675.98 C214.81,675.98 231.62,831.44 251.23,831.44 C270.84,831.44 287.65,670.96 307.26,670.96 C326.87,670.96 343.68,683.50 363.29,683.50 C382.90,683.50 399.71,696.03 419.32,696.03 C438.93,696.03 455.74,691.02 475.35,691.02 C494.96,691.02 511.77,788.81 531.38,788.81 C550.99,788.81 567.80,848.99 587.41,848.99 C626.63,848.99 660.25,701.05 699.47,701.05 C719.08,701.05 735.89,688.51 755.50,688.51 C775.11,688.51 791.92,733.65 811.53,733.65 C831.14,733.65 847.95,678.48 867.56,678.48 C887.17,678.48 903.98,716.10 923.59,716.10 C943.20,716.10 960.01,721.11 979.62,721.11 C999.23,721.11 1016.04,836.46 1035.65,836.46 C1055.26,836.46 1072.07,665.95 1091.68,665.95 C1111.29,665.95 1128.10,670.96 1147.71,670.96 C1167.32,670.96 1184.13,683.50 1203.74,683.50 C1223.35,683.50 1240.16,665.95 1259.77,665.95 C1279.38,665.95 1296.19,728.63 1315.80,728.63 C1335.41,728.63 1352.22,703.56 1371.83,703.56 C1391.44,703.56 1408.25,838.96 1427.86,838.96 C1447.47,838.96 1464.28,688.51 1483.89,688.51 C1503.50,688.51 1520.31,688.51 1539.92,688.51 C1559.53,688.51 1576.34,696.03 1595.95,696.03 C1615.56,696.03 1632.37,683.50 1651.98,683.50 C1671.59,683.50 1688.40,708.57 1708.01,708.57 C1727.62,708.57 1744.43,683.50 1764.04,683.50 C1783.65,683.50 1800.46,843.98 1820.07,843.98 C1839.68,843.98 1856.49,726.12 1876.10,726.12" fill="none" stroke="#008FFB" stroke-width="4" stroke-linecap="butt"/>
<path d="M195.20,816.39 C214.81,816.39 231.62,851.50 251.23,851.50 C270.84,851.50 287.65,846.49 307.26,846.49 C326.87,846.49 343.68,843.98 363.29,843.98 C382.90,843.98 399.71,851.50 419.32,851.50 C438.93,851.50 455.74,801.35 475.35,801.35 C494.96,801.35 511.77,846.49 531.38,846.49 C550.99,846.49 567.80,851.50 587.41,851.50 C626.63,851.50 660.25,848.99 699.47,848.99 C719.08,848.99 735.89,843.98 755.50,843.98 C775.11,843.98 791.92,851.50 811.53,851.50 C831.14,851.50 847.95,838.96 867.56,838.96 C887.17,838.96 903.98,851.50 923.59,851.50 C943.20,851.50 960.01,848.99 979.62,848.99 C999.23,848.99 1016.04,851.50 1035.65,851.50 C1055.26,851.50 1072.07,846.49 1091.68,846.49 C1111.29,846.49 1128.10,843.98 1147.71,843.98 C1167.32,843.98 1184.13,851.50 1203.74,851.50 C1223.35,851.50 1240.16,838.96 1259.77,838.96 C1279.38,838.96 1296.19,841.47 1315.80,841.47 C1335.41,841.47 1352.22,846.49 1371.83,846.49 C1391.44,846.49 1408.25,851.50 1427.86,851.50 C1447.47,851.50 1464.28,851.50 1483.89,851.50 C1503.50,851.50 1520.31,851.50 1539.92,851.50 C1559.53,851.50 1576.34,846.49 1595.95,846.49 C1615.56,846.49 1632.37,848.99 1651.98,848.99 C1671.59,848.99 1688.40,851.50 1708.01,851.50 C1727.62,851.50 1744.43,848.99 1764.04,848.99 C1783.65,848.99 1800.46,851.50 1820.07,851.50 C1839.68,851.50 1856.49,851.50 1876.10,851.50 L1876.10,851.5 L195.20,851.5 Z" fill="url(#g1)"/>
<path d="M195.20,816.39 C214.81,816.39 231.62,851.50 251.23,851.50 C270.84,851.50 287.65,846.49 307.26,846.49 C326.87,846.49 343.68,843.98 363.29,843.98 C382.90,843.98 399.71,851.50 419.32,851.50 C438.93,851.50 455.74,801.35 475.35,801.35 C494.96,801.35 511.77,846.49 531.38,846.49 C550.99,846.49 567.80,851.50 587.41,851.50 C626.63,851.50 660.25,848.99 699.47,848.99 C719.08,848.99 735.89,843.98 755.50,843.98 C775.11,843.98 791.92,851.50 811.53,851.50 C831.14,851.50 847.95,838.96 867.56,838.96 C887.17,838.96 903.98,851.50 923.59,851.50 C943.20,851.50 960.01,848.99 979.62,848.99 C999.23,848.99 1016.04,851.50 1035.65,851.50 C1055.26,851.50 1072.07,846.49 1091.68,846.49 C1111.29,846.49 1128.10,843.98 1147.71,843.98 C1167.32,843.98 1184.13,851.50 1203.74,851.50 C1223.35,851.50 1240.16,838.96 1259.77,838.96 C1279.38,838.96 1296.19,841.47 1315.80,841.47 C1335.41,841.47 1352.22,846.49 1371.83,846.49 C1391.44,846.49 1408.25,851.50 1427.86,851.50 C1447.47,851.50 1464.28,851.50 1483.89,851.50 C1503.50,851.50 1520.31,851.50 1539.92,851.50 C1559.53,851.50 1576.34,846.49 1595.95,846.49 C1615.56,846.49 1632.37,848.99 1651.98,848.99 C1671.59,848.99 1688.40,851.50 1708.01,851.50 C1727.62,851.50 1744.43,848.99 1764.04,848.99 C1783.65,848.99 1800.46,851.50 1820.07,851.50 C1839.68,851.50 1856.49,851.50 1876.10,851.50" fill="none" stroke="#00E396" stroke-width="4" stroke-linecap="butt"/>
<path d="M195.20,846.49 C214.81,846.49 231.62,851.50 251.23,851.50 C270.84,851.50 287.65,851.50 307.26,851.50 C326.87,851.50 343.68,833.95 363.29,833.95 C382.90,833.95 399.71,848.99 419.32,848.99 C438.93,848.99 455.74,843.98 475.35,843.98 C494.96,843.98 511.77,846.49 531.38,846.49 C550.99,846.49 567.80,848.99 587.41,848.99 C626.63,848.99 660.25,843.98 699.47,843.98 C719.08,843.98 735.89,838.96 755.50,838.96 C775.11,838.96 791.92,846.49 811.53,846.49 C831.14,846.49 847.95,843.98 867.56,843.98 C887.17,843.98 903.98,841.47 923.59,841.47 C943.20,841.47 960.01,841.47 979.62,841.47 C999.23,841.47 1016.04,851.50 1035.65,851.50 C1055.26,851.50 1072.07,831.44 1091.68,831.44 C1111.29,831.44 1128.10,841.47 1147.71,841.47 C1167.32,841.47 1184.13,821.41 1203.74,821.41 C1223.35,821.41 1240.16,848.99 1259.77,848.99 C1279.38,848.99 1296.19,841.47 1315.80,841.47 C1335.41,841.47 1352.22,833.95 1371.83,833.95 C1391.44,833.95 1408.25,851.50 1427.86,851.50 C1447.47,851.50 1464.28,838.96 1483.89,838.96 C1503.50,838.96 1520.31,833.95 1539.92,833.95 C1559.53,833.95 1576.34,848.99 1595.95,848.99 C1615.56,848.99 1632.37,838.96 1651.98,838.96 C1671.59,838.96 1688.40,846.49 1708.01,846.49 C1727.62,846.49 1744.43,848.99 1764.04,848.99 C1783.65,848.99 1800.46,851.50 1820.07,851.50 C1839.68,851.50 1856.49,843.98 1876.10,843.98 L1876.10,851.5 L195.20,851.5 Z" fill="url(#g2)"/>
<path d="M195.20,846.49 C214.81,846.49 231.62,851.50 251.23,851.50 C270.84,851.50 287.65,851.50 307.26,851.50 C326.87,851.50 343.68,833.95 363.29,833.95 C382.90,833.95 399.71,848.99 419.32,848.99 C438.93,848.99 455.74,843.98 475.35,843.98 C494.96,843.98 511.77,846.49 531.38,846.49 C550.99,846.49 567.80,848.99 587.41,848.99 C626.63,848.99 660.25,843.98 699.47,843.98 C719.08,843.98 735.89,838.96 755.50,838.96 C775.11,838.96 791.92,846.49 811.53,846.49 C831.14,846.49 847.95,843.98 867.56,843.98 C887.17,843.98 903.98,841.47 923.59,841.47 C943.20,841.47 960.01,841.47 979.62,841.47 C999.23,841.47 1016.04,851.50 1035.65,851.50 C1055.26,851.50 1072.07,831.44 1091.68,831.44 C1111.29,831.44 1128.10,841.47 1147.71,841.47 C1167.32,841.47 1184.13,821.41 1203.74,821.41 C1223.35,821.41 1240.16,848.99 1259.77,848.99 C1279.38,848.99 1296.19,841.47 1315.80,841.47 C1335.41,841.47 1352.22,833.95 1371.83,833.95 C1391.44,833.95 1408.25,851.50 1427.86,851.50 C1447.47,851.50 1464.28,838.96 1483.89,838.96 C1503.50,838.96 1520.31,833.95 1539.92,833.95 C1559.53,833.95 1576.34,848.99 1595.95,848.99 C1615.56,848.99 1632.37,838.96 1651.98,838.96 C1671.59,838.96 1688.40,846.49 1708.01,846.49 C1727.62,846.49 1744.43,848.99 1764.04,848.99 C1783.65,848.99 1800.46,851.50 1820.07,851.50 C1839.68,851.50 1856.49,843.98 1876.10,843.98" fill="none" stroke="#FEB019" stroke-width="4" stroke-linecap="butt"/>
<path d="M195.20,811.38 C214.81,811.38 231.62,851.50 251.23,851.50 C270.84,851.50 287.65,801.35 307.26,801.35 C326.87,801.35 343.68,796.34 363.29,796.34 C382.90,796.34 399.71,813.89 419.32,813.89 C438.93,813.89 455.74,803.86 475.35,803.86 C494.96,803.86 511.77,838.96 531.38,838.96 C550.99,838.96 567.80,848.99 587.41,848.99 C626.63,848.99 660.25,811.38 699.47,811.38 C719.08,811.38 735.89,823.92 755.50,823.92 C775.11,823.92 791.92,786.31 811.53,786.31 C831.14,786.31 847.95,806.37 867.56,806.37 C887.17,806.37 903.98,796.34 923.59,796.34 C943.20,796.34 960.01,781.29 979.62,781.29 C999.23,781.29 1016.04,851.50 1035.65,851.50 C1055.26,851.50 1072.07,796.34 1091.68,796.34 C1111.29,796.34 1128.10,786.31 1147.71,786.31 C1167.32,786.31 1184.13,801.35 1203.74,801.35 C1223.35,801.35 1240.16,808.87 1259.77,808.87 C1279.38,808.87 1296.19,793.83 1315.80,793.83 C1335.41,793.83 1352.22,808.87 1371.83,808.87 C1391.44,808.87 1408.25,851.50 1427.86,851.50 C1447.47,851.50 1464.28,761.23 1483.89,761.23 C1503.50,761.23 1520.31,808.87 1539.92,808.87 C1559.53,808.87 1576.34,808.87 1595.95,808.87 C1615.56,808.87 1632.37,786.31 1651.98,786.31 C1671.59,786.31 1688.40,806.37 1708.01,806.37 C1727.62,806.37 1744.43,806.37 1764.04,806.37 C1783.65,806.37 1800.46,848.99 1820.07,848.99 C1839.68,848.99 1856.49,801.35 1876.10,801.35 L1876.10,851.5 L195.20,851.5 Z" fill="url(#g3)"/>
<path d="M195.20,811.38 C214.81,811.38 231.62,851.50 251.23,851.50 C270.84,851.50 287.65,801.35 307.26,801.35 C326.87,801.35 343.68,796.34 363.29,796.34 C382.90,796.34 399.71,813.89 419.32,813.89 C438.93,813.89 455.74,803.86 475.35,803.86 C494.96,803.86 511.77,838.96 531.38,838.96 C550.99,838.96 567.80,848.99 587.41,848.99 C626.63,848.99 660.25,811.38 699.47,811.38 C719.08,811.38 735.89,823.92 755.50,823.92 C775.11,823.92 791.92,786.31 811.53,786.31 C831.14,786.31 847.95,806.37 867.56,806.37 C887.17,806.37 903.98,796.34 923.59,796.34 C943.20,796.34 960.01,781.29 979.62,781.29 C999.23,781.29 1016.04,851.50 1035.65,851.50 C1055.26,851.50 1072.07,796.34 1091.68,796.34 C1111.29,796.34 1128.10,786.31 1147.71,786.31 C1167.32,786.31 1184.13,801.35 1203.74,801.35 C1223.35,801.35 1240.16,808.87 1259.77,808.87 C1279.38,808.87 1296.19,793.83 1315.80,793.83 C1335.41,793.83 1352.22,808.87 1371.83,808.87 C1391.44,808.87 1408.25,851.50 1427.86,851.50 C1447.47,851.50 1464.28,761.23 1483.89,761.23 C1503.50,761.23 1520.31,808.87 1539.92,808.87 C1559.53,808.87 1576.34,808.87 1595.95,808.87 C1615.56,808.87 1632.37,786.31 1651.98,786.31 C1671.59,786.31 1688.40,806.37 1708.01,806.37 C1727.62,806.37 1744.43,806.37 1764.04,806.37 C1783.65,806.37 1800.46,848.99 1820.07,848.99 C1839.68,848.99 1856.49,801.35 1876.10,801.35" fill="none" stroke="#FF4560" stroke-width="4" stroke-linecap="butt"/>
<path d="M195.20,851.50 C214.81,851.50 231.62,851.50 251.23,851.50 C270.84,851.50 287.65,848.99 307.26,848.99 C326.87,848.99 343.68,851.50 363.29,851.50 C382.90,851.50 399.71,838.96 419.32,838.96 C438.93,838.96 455.74,841.47 475.35,841.47 C494.96,841.47 511.77,851.50 531.38,851.50 C550.99,851.50 567.80,851.50 587.41,851.50 C626.63,851.50 660.25,851.50 699.47,851.50 C719.08,851.50 735.89,851.50 755.50,851.50 C775.11,851.50 791.92,843.98 811.53,843.98 C831.14,843.98 847.95,851.50 867.56,851.50 C887.17,851.50 903.98,851.50 923.59,851.50 C943.20,851.50 960.01,843.98 979.62,843.98 C999.23,843.98 1016.04,851.50 1035.65,851.50 C1055.26,851.50 1072.07,851.50 1091.68,851.50 C1111.29,851.50 1128.10,846.49 1147.71,846.49 C1167.32,846.49 1184.13,851.50 1203.74,851.50 C1223.35,851.50 1240.16,851.50 1259.77,851.50 C1279.38,851.50 1296.19,843.98 1315.80,843.98 C1335.41,843.98 1352.22,843.98 1371.83,843.98 C1391.44,843.98 1408.25,851.50 1427.86,851.50 C1447.47,851.50 1464.28,846.49 1483.89,846.49 C1503.50,846.49 1520.31,848.99 1539.92,848.99 C1559.53,848.99 1576.34,851.50 1595.95,851.50 C1615.56,851.50 1632.37,851.50 1651.98,851.50 C1671.59,851.50 1688.40,851.50 1708.01,851.50 C1727.62,851.50 1744.43,851.50 1764.04,851.50 C1783.65,851.50 1800.46,851.50 1820.07,851.50 C1839.68,851.50 1856.49,851.50 1876.10,851.50 L1876.10,851.5 L195.20,851.5 Z" fill="url(#g4)"/>
<path d="M195.20,851.50 C214.81,851.50 231.62,851.50 251.23,851.50 C270.84,851.50 287.65,848.99 307.26,848.99 C326.87,848.99 343.68,851.50 363.29,851.50 C382.90,851.50 399.71,838.96 419.32,838.96 C438.93,838.96 455.74,841.47 475.35,841.47 C494.96,841.47 511.77,851.50 531.38,851.50 C550.99,851.50 567.80,851.50 587.41,851.50 C626.63,851.50 660.25,851.50 699.47,851.50 C719.08,851.50 735.89,851.50 755.50,851.50 C775.11,851.50 791.92,843.98 811.53,843.98 C831.14,843.98 847.95,851.50 867.56,851.50 C887.17,851.50 903.98,851.50 923.59,851.50 C943.20,851.50 960.01,843.98 979.62,843.98 C999.23,843.98 1016.04,851.50 1035.65,851.50 C1055.26,851.50 1072.07,851.50 1091.68,851.50 C1111.29,851.50 1128.10,846.49 1147.71,846.49 C1167.32,846.49 1184.13,851.50 1203.74,851.50 C1223.35,851.50 1240.16,851.50 1259.77,851.50 C1279.38,851.50 1296.19,843.98 1315.80,843.98 C1335.41,843.98 1352.22,843.98 1371.83,843.98 C1391.44,843.98 1408.25,851.50 1427.86,851.50 C1447.47,851.50 1464.28,846.49 1483.89,846.49 C1503.50,846.49 1520.31,848.99 1539.92,848.99 C1559.53,848.99 1576.34,851.50 1595.95,851.50 C1615.56,851.50 1632.37,851.50 1651.98,851.50 C1671.59,851.50 1688.40,851.50 1708.01,851.50 C1727.62,851.50 1744.43,851.50 1764.04,851.50 C1783.65,851.50 1800.46,851.50 1820.07,851.50 C1839.68,851.50 1856.49,851.50 1876.10,851.50" fill="none" stroke="#775DD0" stroke-width="4" stroke-linecap="butt"/>
<path d="M195.20,851.50 C214.81,851.50 231.62,851.50 251.23,851.50 C270.84,851.50 287.65,851.50 307.26,851.50 C326.87,851.50 343.68,851.50 363.29,851.50 C382.90,851.50 399.71,848.99 419.32,848.99 C438.93,848.99 455.74,848.99 475.35,848.99 C494.96,848.99 511.77,851.50 531.38,851.50 C550.99,851.50 567.80,851.50 587.41,851.50 C626.63,851.50 660.25,851.50 699.47,851.50 C719.08,851.50 735.89,851.50 755.50,851.50 C775.11,851.50 791.92,851.50 811.53,851.50 C831.14,851.50 847.95,851.50 867.56,851.50 C887.17,851.50 903.98,851.50 923.59,851.50 C943.20,851.50 960.01,851.50 979.62,851.50 C999.23,851.50 1016.04,851.50 1035.65,851.50 C1055.26,851.50 1072.07,851.50 1091.68,851.50 C1111.29,851.50 1128.10,851.50 1147.71,851.50 C1167.32,851.50 1184.13,848.99 1203.74,848.99 C1223.35,848.99 1240.16,851.50 1259.77,851.50 C1279.38,851.50 1296.19,851.50 1315.80,851.50 C1335.41,851.50 1352.22,851.50 1371.83,851.50 C1391.44,851.50 1408.25,851.50 1427.86,851.50 C1447.47,851.50 1464.28,851.50 1483.89,851.50 C1503.50,851.50 1520.31,851.50 1539.92,851.50 C1559.53,851.50 1576.34,848.99 1595.95,848.99 C1615.56,848.99 1632.37,851.50 1651.98,851.50 C1671.59,851.50 1688.40,851.50 1708.01,851.50 C1727.62,851.50 1744.43,851.50 1764.04,851.50 C1783.65,851.50 1800.46,851.50 1820.07,851.50 C1839.68,851.50 1856.49,848.99 1876.10,848.99 L1876.10,851.5 L195.20,851.5 Z" fill="url(#g5)"/>
<path d="M195.20,851.50 C214.81,851.50 231.62,851.50 251.23,851.50 C270.84,851.50 287.65,851.50 307.26,851.50 C326.87,851.50 343.68,851.50 363.29,851.50 C382.90,851.50 399.71,848.99 419.32,848.99 C438.93,848.99 455.74,848.99 475.35,848.99 C494.96,848.99 511.77,851.50 531.38,851.50 C550.99,851.50 567.80,851.50 587.41,851.50 C626.63,851.50 660.25,851.50 699.47,851.50 C719.08,851.50 735.89,851.50 755.50,851.50 C775.11,851.50 791.92,851.50 811.53,851.50 C831.14,851.50 847.95,851.50 867.56,851.50 C887.17,851.50 903.98,851.50 923.59,851.50 C943.20,851.50 960.01,851.50 979.62,851.50 C999.23,851.50 1016.04,851.50 1035.65,851.50 C1055.26,851.50 1072.07,851.50 1091.68,851.50 C1111.29,851.50 1128.10,851.50 1147.71,851.50 C1167.32,851.50 1184.13,848.99 1203.74,848.99 C1223.35,848.99 1240.16,851.50 1259.77,851.50 C1279.38,851.50 1296.19,851.50 1315.80,851.50 C1335.41,851.50 1352.22,851.50 1371.83,851.50 C1391.44,851.50 1408.25,851.50 1427.86,851.50 C1447.47,851.50 1464.28,851.50 1483.89,851.50 C1503.50,851.50 1520.31,851.50 1539.92,851.50 C1559.53,851.50 1576.34,848.99 1595.95,848.99 C1615.56,848.99 1632.37,851.50 1651.98,851.50 C1671.59,851.50 1688.40,851.50 1708.01,851.50 C1727.62,851.50 1744.43,851.50 1764.04,851.50 C1783.65,851.50 1800.46,851.50 1820.07,851.50 C1839.68,851.50 1856.49,848.99 1876.10,848.99" fill="none" stroke="#008FFB" stroke-width="4" stroke-linecap="butt"/>
<path d="M195.20,851.50 C214.81,851.50 231.62,851.50 251.23,851.50 C270.84,851.50 287.65,851.50 307.26,851.50 C326.87,851.50 343.68,851.50 363.29,851.50 C382.90,851.50 399.71,851.50 419.32,851.50 C438.93,851.50 455.74,848.99 475.35,848.99 C494.96,848.99 511.77,851.50 531.38,851.50 C550.99,851.50 567.80,851.50 587.41,851.50 C626.63,851.50 660.25,851.50 699.47,851.50 C719.08,851.50 735.89,851.50 755.50,851.50 C775.11,851.50 791.92,851.50 811.53,851.50 C831.14,851.50 847.95,851.50 867.56,851.50 C887.17,851.50 903.98,851.50 923.59,851.50 C943.20,851.50 960.01,851.50 979.62,851.50 C999.23,851.50 1016.04,851.50 1035.65,851.50 C1055.26,851.50 1072.07,851.50 1091.68,851.50 C1111.29,851.50 1128.10,851.50 1147.71,851.50 C1167.32,851.50 1184.13,851.50 1203.74,851.50 C1223.35,851.50 1240.16,851.50 1259.77,851.50 C1279.38,851.50 1296.19,851.50 1315.80,851.50 C1335.41,851.50 1352.22,851.50 1371.83,851.50 C1391.44,851.50 1408.25,851.50 1427.86,851.50 C1447.47,851.50 1464.28,851.50 1483.89,851.50 C1503.50,851.50 1520.31,851.50 1539.92,851.50 C1559.53,851.50 1576.34,851.50 1595.95,851.50 C1615.56,851.50 1632.37,851.50 1651.98,851.50 C1671.59,851.50 1688.40,851.50 1708.01,851.50 C1727.62,851.50 1744.43,846.49 1764.04,846.49 C1783.65,846.49 1800.46,851.50 1820.07,851.50 C1839.68,851.50 1856.49,851.50 1876.10,851.50 L1876.10,851.5 L195.20,851.5 Z" fill="url(#g6)"/>
<path d="M195.20,851.50 C214.81,851.50 231.62,851.50 251.23,851.50 C270.84,851.50 287.65,851.50 307.26,851.50 C326.87,851.50 343.68,851.50 363.29,851.50 C382.90,851.50 399.71,851.50 419.32,851.50 C438.93,851.50 455.74,848.99 475.35,848.99 C494.96,848.99 511.77,851.50 531.38,851.50 C550.99,851.50 567.80,851.50 587.41,851.50 C626.63,851.50 660.25,851.50 699.47,851.50 C719.08,851.50 735.89,851.50 755.50,851.50 C775.11,851.50 791.92,851.50 811.53,851.50 C831.14,851.50 847.95,851.50 867.56,851.50 C887.17,851.50 903.98,851.50 923.59,851.50 C943.20,851.50 960.01,851.50 979.62,851.50 C999.23,851.50 1016.04,851.50 1035.65,851.50 C1055.26,851.50 1072.07,851.50 1091.68,851.50 C1111.29,851.50 1128.10,851.50 1147.71,851.50 C1167.32,851.50 1184.13,851.50 1203.74,851.50 C1223.35,851.50 1240.16,851.50 1259.77,851.50 C1279.38,851.50 1296.19,851.50 1315.80,851.50 C1335.41,851.50 1352.22,851.50 1371.83,851.50 C1391.44,851.50 1408.25,851.50 1427.86,851.50 C1447.47,851.50 1464.28,851.50 1483.89,851.50 C1503.50,851.50 1520.31,851.50 1539.92,851.50 C1559.53,851.50 1576.34,851.50 1595.95,851.50 C1615.56,851.50 1632.37,851.50 1651.98,851.50 C1671.59,851.50 1688.40,851.50 1708.01,851.50 C1727.62,851.50 1744.43,846.49 1764.04,846.49 C1783.65,846.49 1800.46,851.50 1820.07,851.50 C1839.68,851.50 1856.49,851.50 1876.10,851.50" fill="none" stroke="#00E396" stroke-width="4" stroke-linecap="butt"/>
<rect x="190" y="850.8" width="1690" height="3" fill="#fff" fill-opacity="0.55"/>
<circle cx="709.3" cy="890.8" r="6" fill="#008FFB"/>
<text x="718" y="895" font-size="12" fill="#373d3f">Automatic - Light</text>
<circle cx="823.9" cy="890.8" r="6" fill="#00E396"/>
<text x="833" y="895" font-size="12" fill="#373d3f">Heavy Bus</text>
<circle cx="906.8" cy="890.8" r="6" fill="#FEB019"/>
<text x="916" y="895" font-size="12" fill="#373d3f">Heavy Truck</text>
<circle cx="998.5" cy="890.8" r="6" fill="#FF4560"/>
<text x="1007.6" y="895" font-size="12" fill="#373d3f">Manual - Light</text>
<circle cx="1099.7" cy="890.8" r="6" fill="#775DD0"/>
<text x="1108.8" y="895" font-size="12" fill="#373d3f">Motor Cycle</text>
<circle cx="1189" cy="890.8" r="6" fill="#008FFB"/>
<text x="1198" y="895" font-size="12" fill="#373d3f">Heavy Forklift</text>
<circle cx="1286.6" cy="890.8" r="6" fill="#00E396"/>
<text x="1296" y="895" font-size="12" fill="#373d3f">Fork Lift</text>
</svg>
</body></html>
